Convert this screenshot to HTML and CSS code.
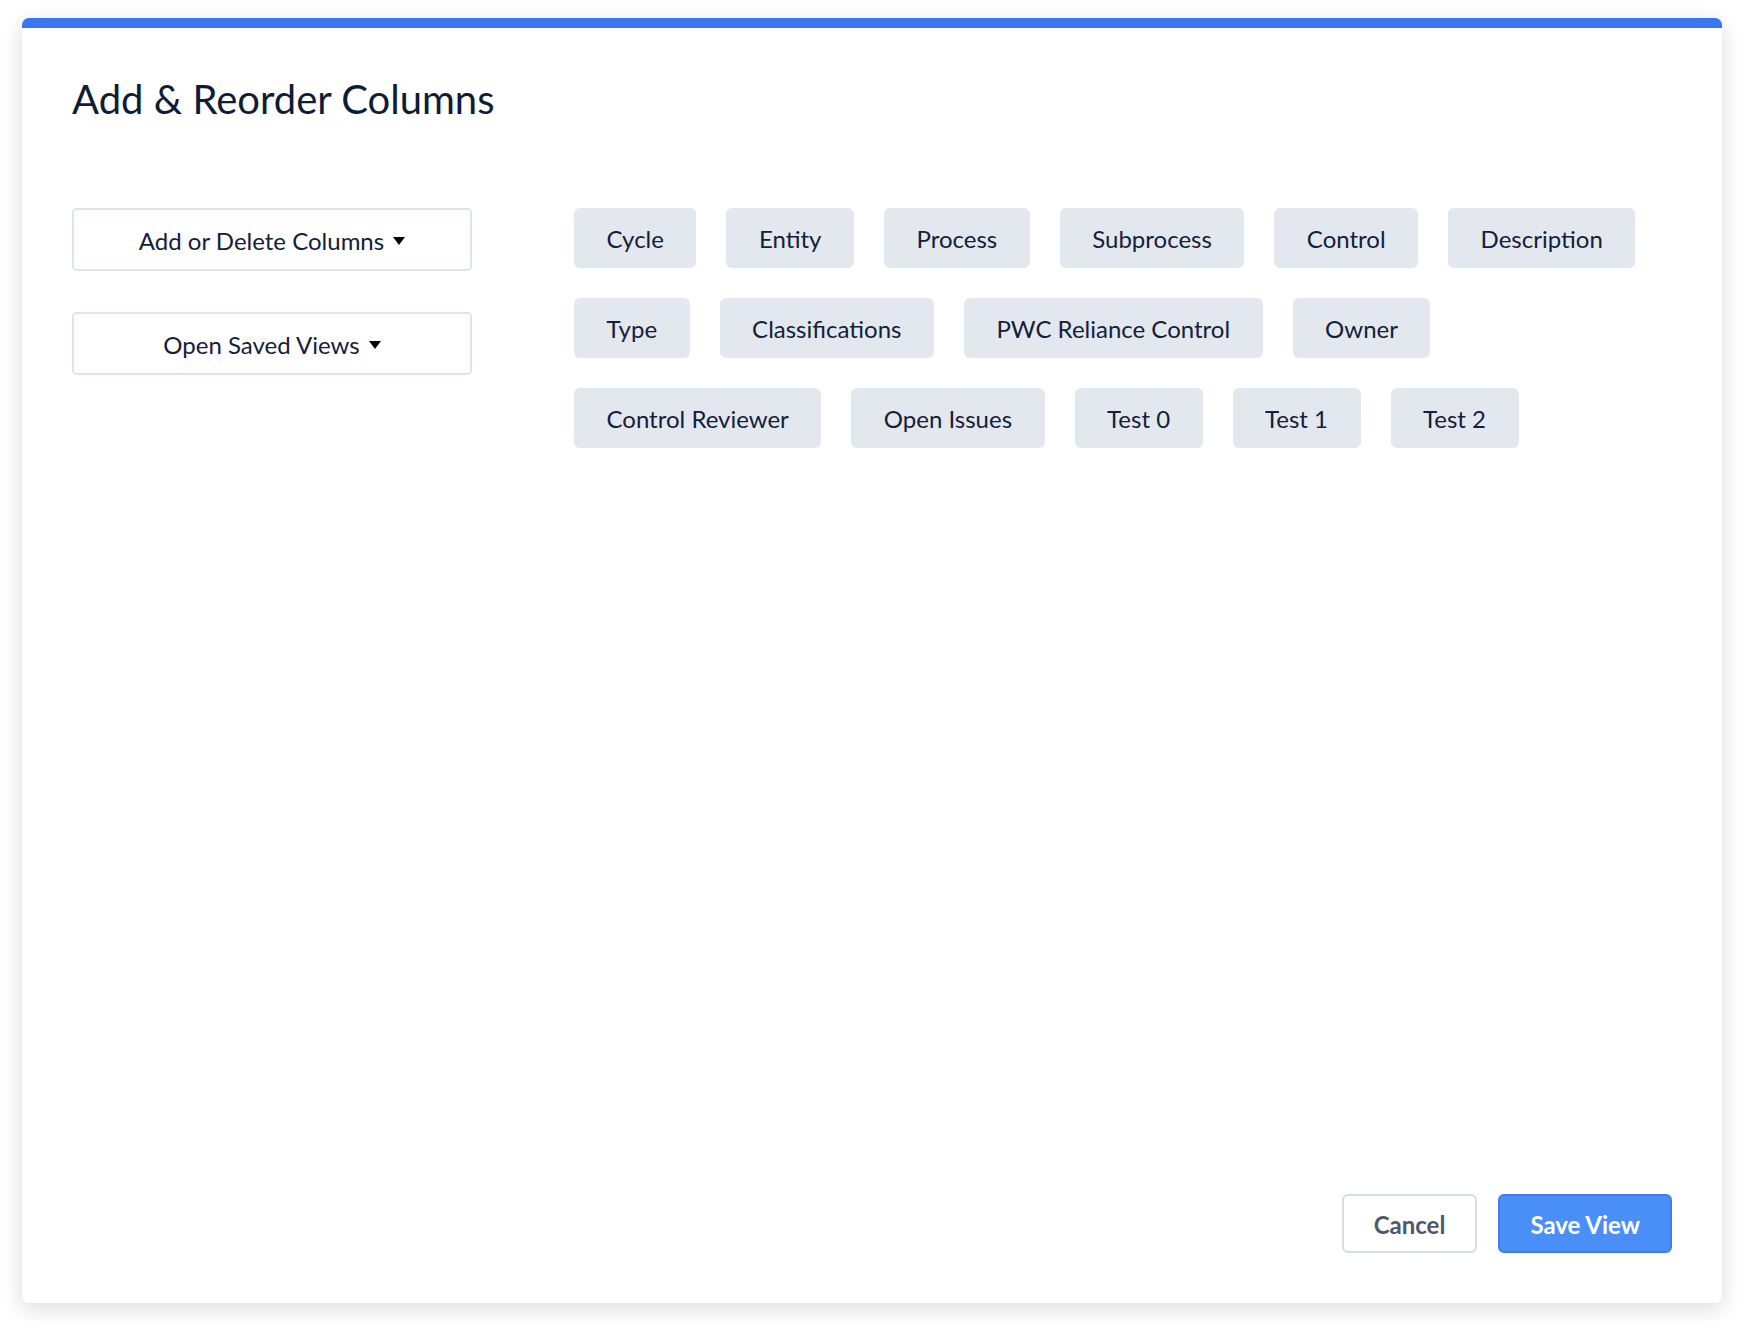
FILE: index.html
```html
<!DOCTYPE html>
<html lang="en">
<head>
    <meta charset="UTF-8">
    <meta name="viewport" content="width=device-width, initial-scale=1.0">
    <title>Add &amp; Reorder Columns</title>
    <link rel="stylesheet" href="styles.css">
</head>
<body>
    <div class="modal">
        <h1 class="modal-title">Add &amp; Reorder Columns</h1>

        <div class="modal-body">
            <div class="side-actions">
                <button class="dropdown-btn">Add or Delete Columns <span class="caret"></span></button>
                <button class="dropdown-btn">Open Saved Views <span class="caret"></span></button>
            </div>

            <div class="column-list">
                <div class="column-chip">Cycle</div>
                <div class="column-chip">Entity</div>
                <div class="column-chip">Process</div>
                <div class="column-chip">Subprocess</div>
                <div class="column-chip">Control</div>
                <div class="column-chip">Description</div>
                <div class="column-chip">Type</div>
                <div class="column-chip">Classifications</div>
                <div class="column-chip">PWC Reliance Control</div>
                <div class="column-chip">Owner</div>
                <div class="column-chip">Control Reviewer</div>
                <div class="column-chip">Open Issues</div>
                <div class="column-chip">Test 0</div>
                <div class="column-chip">Test 1</div>
                <div class="column-chip">Test 2</div>
            </div>
        </div>

        <div class="modal-footer">
            <button class="btn btn-cancel">Cancel</button>
            <button class="btn btn-primary">Save View</button>
        </div>
    </div>
</body>
</html>
```

FILE: styles.css
```css
* {
    box-sizing: border-box;
}
body {
    margin: 0;
    padding: 18px 22px;
    font-family: Lato, "Open Sans", Arial, sans-serif;
    background-color: #fff;
    color: #14203a;
}
.modal {
    width: 1700px;
    height: 1285px;
    display: flex;
    flex-direction: column;
    padding: 47px 50px 50px 50px;
    background-color: #fff;
    border-top: 10px solid #3777f5;
    border-radius: 7px;
    box-shadow: 0 6px 22px rgba(0, 0, 0, 0.14);
}
.modal-title {
    margin: 0;
    font-size: 40px;
    line-height: 48px;
    font-weight: 400;
    color: #0f1c38;
}
.modal-body {
    display: flex;
    gap: 102px;
    margin-top: 85px;
}
.side-actions {
    display: flex;
    flex-direction: column;
    gap: 41px;
    width: 400px;
    flex-shrink: 0;
}
.dropdown-btn {
    height: 63px;
    display: flex;
    align-items: center;
    justify-content: center;
    gap: 9px;
    padding-top: 2px;
    background-color: #fff;
    border: 2px solid #dfe4eb;
    border-radius: 5px;
    font-family: inherit;
    font-size: 24px;
    color: #14203a;
    cursor: pointer;
}
.caret {
    width: 0;
    height: 0;
    border-left: 6px solid transparent;
    border-right: 6px solid transparent;
    border-top: 8px solid #000;
    margin-top: 1px;
}
.column-list {
    flex: 1;
    display: flex;
    flex-wrap: wrap;
    align-content: flex-start;
    gap: 30px;
}
.column-chip {
    height: 60px;
    display: flex;
    align-items: center;
    padding: 0 32.5px;
    background-color: #e3e8ef;
    border-radius: 6px;
    font-size: 24px;
    color: #14203a;
    cursor: grab;
}
.modal-footer {
    margin-top: auto;
    display: flex;
    justify-content: flex-end;
    gap: 21px;
}
.btn {
    height: 59px;
    padding: 2px 30px 0 30px;
    border-radius: 6px;
    font-family: inherit;
    font-size: 24px;
    font-weight: 700;
    cursor: pointer;
}
.btn-cancel {
    background-color: #fff;
    border: 2px solid #d6dce4;
    color: #4d5a6e;
}
.btn-primary {
    background-color: #4a8ef8;
    border: 2px solid #3b7ef2;
    color: #fff;
}
```
